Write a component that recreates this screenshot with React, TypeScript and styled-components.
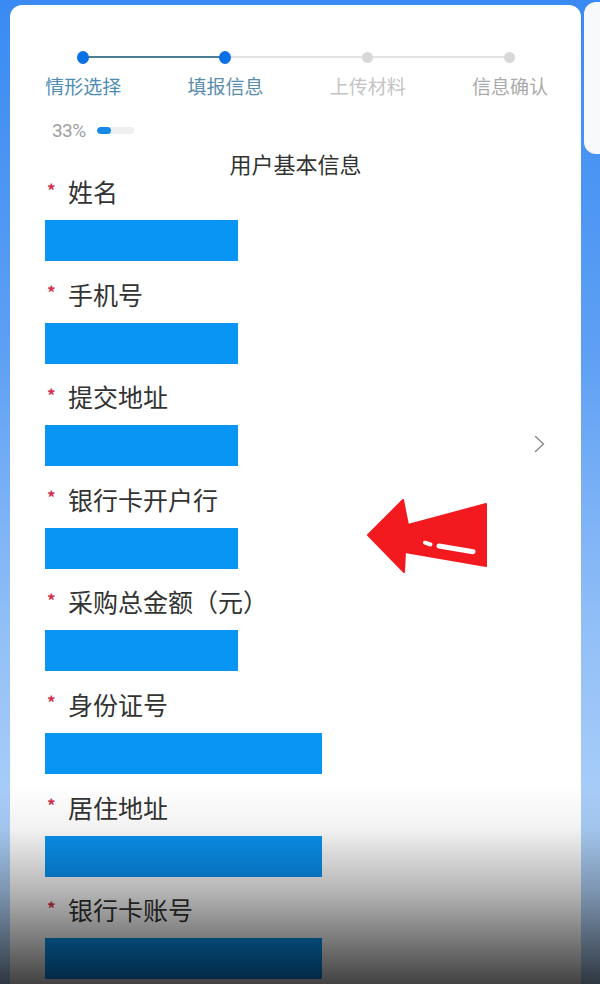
import React from 'react'
import styled, { createGlobalStyle } from 'styled-components'

const GlobalStyle = createGlobalStyle`
  html, body {
    margin: 0;
    padding: 0;
  }
  body {
    font-family: 'Noto Sans CJK SC', 'Noto Sans', sans-serif;
    color: #333;
  }
  * {
    box-sizing: border-box;
  }
`

const Page = styled.div`
  position: relative;
  width: 600px;
  height: 984px;
  overflow: hidden;
  display: flex;
  align-items: flex-start;
  background: linear-gradient(180deg, #398bf3 0%, #5d9ff4 35%, #93c0f7 65%, #acd0f9 85%, #b4d4f9 100%);
`
const Card = styled.main`
  width: 574px;
  height: 979px;
  margin: 5px 0 0 10px;
  background: #ffffff;
  border-radius: 12px 12px 0 0;
  overflow: hidden;
`
const SidePanel = styled.aside`
  width: 16px;
  height: 152px;
  margin: 2px 0 0 3px;
  background: #f8f9fb;
  border-radius: 12px 0 0 12px;
`

const Stepper = styled.ol`
  display: grid;
  grid-template-columns: repeat(4, 1fr);
  margin: 0;
  padding: 0 0 0 2px;
  list-style: none;
`
const Step = styled.li<{ $line?: string }>`
  position: relative;
  display: flex;
  flex-direction: column;
  align-items: center;
  padding-top: 46px;

  ${({ $line }) =>
    $line
      ? `&::after {
    content: '';
    position: absolute;
    top: 51px;
    left: 50%;
    width: 100%;
    height: 2px;
    background: ${$line};
  }`
      : ''}
`
const Dot = styled.span<{ $active?: boolean }>`
  position: relative;
  z-index: 1;
  width: 12px;
  height: 12px;
  display: flex;
  align-items: center;
  justify-content: center;

  &::before {
    content: '';
    width: ${({ $active }) => ($active ? '13px' : '11px')};
    height: ${({ $active }) => ($active ? '13px' : '11px')};
    border-radius: 50%;
    background: ${({ $active }) => ($active ? '#0b6fe6' : '#d8d8d8')};
  }
`
const StepLabel = styled.span<{ $color: string }>`
  margin-top: 11px;
  font-size: 19px;
  line-height: 24px;
  color: ${({ $color }) => $color};
  white-space: nowrap;
`

const ProgressRow = styled.div`
  display: flex;
  align-items: center;
  gap: 11px;
  height: 20px;
  margin: 22px 0 0 42px;
`
const Percent = styled.span`
  font-family: 'Roboto', 'Noto Sans', sans-serif;
  font-size: 19px;
  letter-spacing: -0.6px;
  color: #a0a0a0;
`
const Track = styled.div`
  width: 37px;
  height: 7px;
  border-radius: 4px;
  background: #efefef;
  overflow: hidden;
`
const Fill = styled.div`
  height: 100%;
  border-radius: 4px;
  background: #1689e6;
`

const SectionTitle = styled.h2`
  margin: 9px 0 0;
  text-align: center;
  font-size: 22px;
  line-height: 28px;
  font-weight: 400;
  color: #333;
`

const Form = styled.div`
  display: flex;
  flex-direction: column;
  gap: 17.6px;
  margin-top: -1px;
  padding: 0 36px 0 35px;
`
const Field = styled.div`
  display: flex;
  flex-direction: column;
`
const Label = styled.label`
  display: flex;
  align-items: center;
  height: 30px;
  font-size: 25px;
  color: #333;
`
const Required = styled.span`
  width: 23px;
  padding-left: 2px;
  font-size: 17px;
  font-weight: 700;
  color: #d2304e;
  transform: translateY(-2px);
`
const InputRow = styled.div`
  display: flex;
  align-items: center;
  justify-content: space-between;
  margin-top: 14px;
`
const Bar = styled.div<{ $wide?: boolean }>`
  width: ${({ $wide }) => ($wide ? '277px' : '193px')};
  height: 41px;
  background: #0995f4;
`
const Chevron = styled.svg`
  width: 11px;
  height: 18px;
  flex-shrink: 0;
  transform: translateY(-2px);
`

const Arrow = styled.svg`
  position: absolute;
  left: 366px;
  top: 498px;
  width: 122px;
  height: 76px;
`
const Shade = styled.div`
  position: absolute;
  left: 0;
  right: 0;
  bottom: 0;
  height: 200px;
  pointer-events: none;
  background: linear-gradient(
    180deg,
    rgba(0, 0, 0, 0) 0%,
    rgba(0, 0, 0, 0.05) 22%,
    rgba(0, 0, 0, 0.3) 55%,
    rgba(0, 0, 0, 0.74) 100%
  );
`

const steps = [
  { label: '情形选择', color: '#4d8db4', active: true, line: '#4b7d93' },
  { label: '填报信息', color: '#5a8cab', active: true, line: '#e4e4e4' },
  { label: '上传材料', color: '#c4c4c4', active: false, line: '#e4e4e4' },
  { label: '信息确认', color: '#aaaaaa', active: false },
]

const fields = [
  { label: '姓名' },
  { label: '手机号' },
  { label: '提交地址', picker: true },
  { label: '银行卡开户行' },
  { label: '采购总金额（元）' },
  { label: '身份证号', wide: true },
  { label: '居住地址', wide: true },
  { label: '银行卡账号', wide: true },
]

const App: React.FC = () => {
  const progress = 33

  return (
    <>
      <GlobalStyle />
      <Page>
        <Card>
          <Stepper>
            {steps.map((step) => (
              <Step key={step.label} $line={step.line}>
                <Dot $active={step.active} />
                <StepLabel $color={step.color}>{step.label}</StepLabel>
              </Step>
            ))}
          </Stepper>

          <ProgressRow>
            <Percent>{progress}%</Percent>
            <Track>
              <Fill style={{ width: `${(progress / 100) * 37 + 2}px` }} />
            </Track>
          </ProgressRow>

          <SectionTitle>用户基本信息</SectionTitle>

          <Form>
            {fields.map((field) => (
              <Field key={field.label}>
                <Label>
                  <Required>*</Required>
                  {field.label}
                </Label>
                <InputRow>
                  <Bar $wide={field.wide} />
                  {field.picker && (
                    <Chevron viewBox='0 0 11 18'>
                      <path
                        d='M1.5 1.5 L9.5 9 L1.5 16.5'
                        fill='none'
                        stroke='#8c8c8c'
                        strokeWidth='1.5'
                        strokeLinecap='round'
                        strokeLinejoin='round'
                      />
                    </Chevron>
                  )}
                </InputRow>
              </Field>
            ))}
          </Form>
        </Card>
        <SidePanel />

        <Arrow viewBox='0 0 122 76'>
          <polygon
            points='2,37 37,2 42,27 120,6 120,68 39,54 38,74'
            fill='#f31a1f'
            stroke='#f31a1f'
            strokeWidth='2'
            strokeLinejoin='round'
          />
          <line x1='59' y1='44.7' x2='64.5' y2='46.5' stroke='#fff' strokeWidth='4' strokeLinecap='round' />
          <line x1='73' y1='48' x2='107' y2='53.7' stroke='#fff' strokeWidth='5' strokeLinecap='round' />
        </Arrow>

        <Shade />
      </Page>
    </>
  )
}

export default App
